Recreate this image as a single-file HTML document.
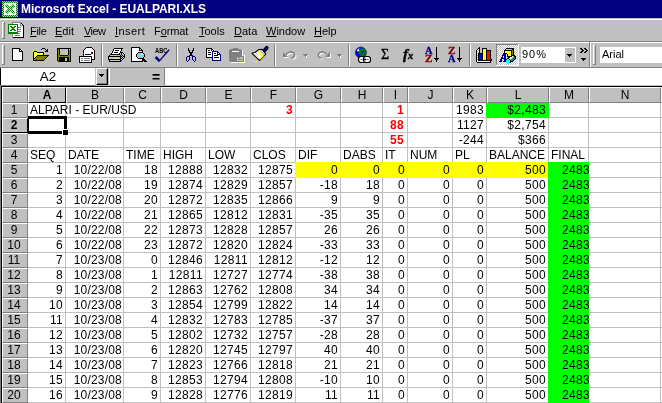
<!DOCTYPE html>
<html><head><meta charset="utf-8"><title>Microsoft Excel - EUALPARI.XLS</title>
<style>
html,body{margin:0;padding:0;}
body{width:662px;height:403px;overflow:hidden;background:#c0c0c0;position:relative;font-family:"Liberation Sans",Arial,sans-serif;font-size:12px;color:#000;}
div,span{position:absolute;box-sizing:border-box;white-space:nowrap;}
svg{position:absolute;overflow:visible;}
.title{left:0;top:0;width:662px;height:18px;background:#000080;}
.ttext{left:21px;top:3px;color:#fff;font-weight:bold;font-size:12px;line-height:13px;letter-spacing:-0.05px;}
.m{top:25px;font-size:11px;line-height:13px;}
.m u{text-decoration:underline;text-decoration-thickness:1px;text-underline-offset:1px;}
.hl{background:#fff;}
.sh{background:#808080;}
.bk{background:#000;}
.grid{left:28px;top:103px;width:634px;height:300px;background:#fff;}
.vl{top:103px;width:1px;height:300px;background:#c0c0c0;}
.hln{left:28px;height:1px;width:634px;background:#c0c0c0;}
.ch{top:87px;height:16px;background:#c0c0c0;border-top:1px solid #fff;border-left:1px solid #fff;border-right:1px solid #808080;border-bottom:1px solid #808080;text-align:center;line-height:15px;font-size:12px;}
.rh{left:2px;width:26px;height:15px;padding-right:2px;background:#c0c0c0;border-top:1px solid #fff;border-left:1px solid #fff;border-right:1px solid #808080;border-bottom:1px solid #808080;text-align:center;line-height:13px;font-size:12px;}
.c{height:14px;line-height:14px;font-size:12px;}
.r{text-align:right;letter-spacing:0.33px;}
.red{color:#f00;font-weight:bold;}
.dt{letter-spacing:0.2px;}
</style></head><body>
<div style="left:0;top:0;width:662px;height:403px;will-change:transform">

<div class="title"></div>
<div class="ttext">Microsoft Excel - EUALPARI.XLS</div>
<svg style="left:2px;top:1px" width="16" height="16" viewBox="0 0 16 16"><defs><pattern id="gd" width="2" height="2" patternUnits="userSpaceOnUse"><rect width="2" height="2" fill="#008000"/><rect width="1" height="1" fill="#c0c0c0"/><rect x="1" y="1" width="1" height="1" fill="#c0c0c0"/></pattern></defs><rect width="16" height="16" fill="url(#gd)" shape-rendering="crispEdges"/><rect x="2" y="2" width="12" height="12" fill="#fff" shape-rendering="crispEdges"/><path d="M5 5L11 11M11 5L5 11" stroke="url(#gd)" stroke-width="3" stroke-linecap="square"/><path d="M4.5 4.5L11.5 11.5" stroke="#fff" stroke-width="0.9"/></svg>
<div class="hl" style="left:0;top:19px;width:662px;height:1px"></div>
<div class="sh" style="left:2px;top:22px;width:3px;height:17px"></div><div class="hl" style="left:2px;top:22px;width:2px;height:16px"></div><div style="left:3px;top:23px;width:1px;height:15px;background:#c0c0c0"></div>
<svg style="left:8px;top:22px" width="17" height="16" viewBox="0 0 17 16" shape-rendering="crispEdges"><path fill="#808080" d="M4 0h9v1h-9zM4 1h1v1h-1zM12 1h1v1h-1zM12 2h1v1h-1zM12 3h3v1h-3zM10 5h3v1h-3zM10 7h3v1h-3zM10 9h3v1h-3zM10 11h2v1h-2zM4 12h1v1h-1zM4 13h1v1h-1zM7 13h5v1h-5zM4 14h1v1h-1z"/><path fill="#fff" d="M5 1h7v1h-7zM10 2h2v1h-2zM13 2h1v1h-1zM1 3h8v1h-8zM10 3h2v1h-2zM1 4h1v1h-1zM4 4h2v1h-2zM8 4h1v1h-1zM10 4h5v1h-5zM1 5h2v1h-2zM7 5h2v1h-2zM13 5h2v1h-2zM1 6h3v1h-3zM6 6h3v1h-3zM10 6h5v1h-5zM1 7h2v1h-2zM7 7h2v1h-2zM13 7h2v1h-2zM1 8h1v1h-1zM4 8h2v1h-2zM8 8h1v1h-1zM10 8h5v1h-5zM1 9h8v1h-8zM13 9h2v1h-2zM10 10h5v1h-5zM12 11h3v1h-3zM5 12h10v1h-10zM5 13h2v1h-2zM12 13h3v1h-3zM5 14h10v1h-10z"/><path fill="#000" d="M13 1h1v1h-1zM14 2h1v1h-1zM15 3h1v1h-1zM15 4h1v1h-1zM15 5h1v1h-1zM15 6h1v1h-1zM15 7h1v1h-1zM15 8h1v1h-1zM15 9h1v1h-1zM15 10h1v1h-1zM15 11h1v1h-1zM15 12h1v1h-1zM15 13h1v1h-1zM15 14h1v1h-1zM5 15h11v1h-11z"/><path fill="#008000" d="M0 2h10v1h-10zM0 3h1v1h-1zM9 3h1v1h-1zM0 4h1v1h-1zM2 4h2v1h-2zM6 4h2v1h-2zM9 4h1v1h-1zM0 5h1v1h-1zM3 5h4v1h-4zM9 5h1v1h-1zM0 6h1v1h-1zM4 6h2v1h-2zM9 6h1v1h-1zM0 7h1v1h-1zM3 7h4v1h-4zM9 7h1v1h-1zM0 8h1v1h-1zM2 8h2v1h-2zM6 8h2v1h-2zM9 8h1v1h-1zM0 9h1v1h-1zM9 9h1v1h-1zM0 10h10v1h-10zM0 11h10v1h-10z"/></svg>
<div class="m" style="left:30px;letter-spacing:-0.3px"><u>F</u>ile</div>
<div class="m" style="left:55px;letter-spacing:0px"><u>E</u>dit</div>
<div class="m" style="left:84px;letter-spacing:-0.6px"><u>V</u>iew</div>
<div class="m" style="left:115px;letter-spacing:0.45px"><u>I</u>nsert</div>
<div class="m" style="left:154px;letter-spacing:-0.1px">F<u>o</u>rmat</div>
<div class="m" style="left:199px;letter-spacing:0px"><u>T</u>ools</div>
<div class="m" style="left:234px;letter-spacing:0px"><u>D</u>ata</div>
<div class="m" style="left:266px;letter-spacing:0px"><u>W</u>indow</div>
<div class="m" style="left:314px;letter-spacing:0px"><u>H</u>elp</div>
<div class="sh" style="left:0;top:41px;width:662px;height:1px"></div>
<div class="hl" style="left:0;top:42px;width:662px;height:1px"></div>
<div class="sh" style="left:2px;top:45px;width:3px;height:20px"></div><div class="hl" style="left:2px;top:45px;width:2px;height:19px"></div><div style="left:3px;top:46px;width:1px;height:18px;background:#c0c0c0"></div>
<div class="sh" style="left:101px;top:44px;width:1px;height:22px"></div>
<div class="hl" style="left:102px;top:44px;width:1px;height:22px"></div>
<div class="sh" style="left:176px;top:44px;width:1px;height:22px"></div>
<div class="hl" style="left:177px;top:44px;width:1px;height:22px"></div>
<div class="sh" style="left:274px;top:44px;width:1px;height:22px"></div>
<div class="hl" style="left:275px;top:44px;width:1px;height:22px"></div>
<div class="sh" style="left:348px;top:44px;width:1px;height:22px"></div>
<div class="hl" style="left:349px;top:44px;width:1px;height:22px"></div>
<div class="sh" style="left:469px;top:44px;width:1px;height:22px"></div>
<div class="hl" style="left:470px;top:44px;width:1px;height:22px"></div>
<svg style="left:12px;top:48px" width="11" height="13" viewBox="0 0 11 13" shape-rendering="crispEdges"><path fill="#000" d="M0 0h8v1h-8zM0 1h1v1h-1zM7 1h2v1h-2zM0 2h1v1h-1zM7 2h1v1h-1zM9 2h1v1h-1zM0 3h1v1h-1zM7 3h4v1h-4zM0 4h1v1h-1zM10 4h1v1h-1zM0 5h1v1h-1zM10 5h1v1h-1zM0 6h1v1h-1zM10 6h1v1h-1zM0 7h1v1h-1zM10 7h1v1h-1zM0 8h1v1h-1zM10 8h1v1h-1zM0 9h1v1h-1zM10 9h1v1h-1zM0 10h1v1h-1zM10 10h1v1h-1zM0 11h1v1h-1zM10 11h1v1h-1zM0 12h11v1h-11z"/><path fill="#fff" d="M1 1h6v1h-6zM1 2h6v1h-6zM8 2h1v1h-1zM1 3h6v1h-6zM1 4h9v1h-9zM1 5h9v1h-9zM1 6h9v1h-9zM1 7h9v1h-9zM1 8h9v1h-9zM1 9h9v1h-9zM1 10h9v1h-9zM1 11h9v1h-9z"/></svg>
<svg style="left:33px;top:48px" width="16" height="13" viewBox="0 0 16 13" shape-rendering="crispEdges"><path fill="#000" d="M9 0h3v1h-3zM8 1h1v1h-1zM12 1h1v1h-1zM14 1h1v1h-1zM13 2h2v1h-2zM1 3h3v1h-3zM12 3h3v1h-3zM0 4h1v1h-1zM4 4h7v1h-7zM0 5h1v1h-1zM10 5h1v1h-1zM0 6h1v1h-1zM10 6h1v1h-1zM0 7h1v1h-1zM4 7h12v1h-12zM0 8h1v1h-1zM3 8h1v1h-1zM14 8h1v1h-1zM0 9h1v1h-1zM2 9h1v1h-1zM13 9h1v1h-1zM0 10h2v1h-2zM12 10h1v1h-1zM0 11h1v1h-1zM11 11h1v1h-1zM0 12h11v1h-11z"/><path fill="#ff0" d="M1 4h1v1h-1zM3 4h1v1h-1zM2 5h1v1h-1zM4 5h1v1h-1zM6 5h1v1h-1zM8 5h1v1h-1zM1 6h1v1h-1zM3 6h1v1h-1zM5 6h1v1h-1zM7 6h1v1h-1zM9 6h1v1h-1zM2 7h1v1h-1zM1 8h1v1h-1z"/><path fill="#fff" d="M2 4h1v1h-1zM1 5h1v1h-1zM3 5h1v1h-1zM5 5h1v1h-1zM7 5h1v1h-1zM9 5h1v1h-1zM2 6h1v1h-1zM4 6h1v1h-1zM6 6h1v1h-1zM8 6h1v1h-1zM1 7h1v1h-1zM3 7h1v1h-1zM2 8h1v1h-1zM1 9h1v1h-1z"/><path fill="#808000" d="M4 8h10v1h-10zM3 9h10v1h-10zM2 10h10v1h-10zM1 11h10v1h-10z"/></svg>
<svg style="left:57px;top:48px" width="14" height="14" viewBox="0 0 14 14" shape-rendering="crispEdges"><path fill="#000" d="M0 0h14v1h-14zM0 1h1v1h-1zM2 1h1v1h-1zM11 1h1v1h-1zM13 1h1v1h-1zM0 2h1v1h-1zM2 2h1v1h-1zM11 2h1v1h-1zM13 2h1v1h-1zM0 3h1v1h-1zM2 3h1v1h-1zM11 3h1v1h-1zM13 3h1v1h-1zM0 4h1v1h-1zM2 4h1v1h-1zM11 4h1v1h-1zM13 4h1v1h-1zM0 5h1v1h-1zM2 5h1v1h-1zM11 5h1v1h-1zM13 5h1v1h-1zM0 6h1v1h-1zM2 6h1v1h-1zM11 6h1v1h-1zM13 6h1v1h-1zM0 7h1v1h-1zM3 7h8v1h-8zM13 7h1v1h-1zM0 8h1v1h-1zM13 8h1v1h-1zM0 9h1v1h-1zM2 9h10v1h-10zM13 9h1v1h-1zM0 10h1v1h-1zM2 10h6v1h-6zM10 10h2v1h-2zM13 10h1v1h-1zM0 11h1v1h-1zM2 11h6v1h-6zM10 11h2v1h-2zM13 11h1v1h-1zM0 12h1v1h-1zM2 12h6v1h-6zM10 12h2v1h-2zM13 12h1v1h-1zM1 13h13v1h-13z"/><path fill="#808000" d="M1 1h1v1h-1zM1 2h1v1h-1zM12 2h1v1h-1zM1 3h1v1h-1zM12 3h1v1h-1zM1 4h1v1h-1zM12 4h1v1h-1zM1 5h1v1h-1zM12 5h1v1h-1zM1 6h1v1h-1zM12 6h1v1h-1zM1 7h2v1h-2zM11 7h2v1h-2zM1 8h12v1h-12zM1 9h1v1h-1zM12 9h1v1h-1zM1 10h1v1h-1zM12 10h1v1h-1zM1 11h1v1h-1zM12 11h1v1h-1zM1 12h1v1h-1zM12 12h1v1h-1z"/><path fill="#c0c0c0" d="M3 1h8v1h-8zM3 2h8v1h-8zM3 3h8v1h-8zM3 4h8v1h-8zM3 5h8v1h-8zM3 6h8v1h-8zM8 10h2v1h-2zM8 11h2v1h-2zM8 12h2v1h-2z"/><path fill="#fff" d="M12 1h1v1h-1z"/></svg>
<svg style="left:79px;top:47px" width="16" height="16" viewBox="0 0 16 16" shape-rendering="crispEdges"><path fill="#000" d="M7 0h6v1h-6zM6 1h1v1h-1zM13 1h1v1h-1zM5 2h1v1h-1zM14 2h1v1h-1zM4 3h1v1h-1zM15 3h1v1h-1zM4 4h1v1h-1zM15 4h1v1h-1zM4 5h1v1h-1zM15 5h1v1h-1zM4 6h1v1h-1zM15 6h1v1h-1zM4 7h1v1h-1zM15 7h1v1h-1zM4 8h1v1h-1zM15 8h1v1h-1zM0 9h13v1h-13zM15 9h1v1h-1zM0 10h1v1h-1zM12 10h1v1h-1zM15 10h1v1h-1zM0 11h1v1h-1zM12 11h1v1h-1zM15 11h1v1h-1zM0 12h1v1h-1zM12 12h4v1h-4zM0 13h1v1h-1zM12 13h1v1h-1zM0 14h1v1h-1zM12 14h1v1h-1zM0 15h13v1h-13z"/><path fill="#fff" d="M7 1h6v1h-6zM6 2h8v1h-8zM5 3h10v1h-10zM5 4h10v1h-10zM5 5h7v1h-7zM14 5h1v1h-1zM5 6h7v1h-7zM14 6h1v1h-1zM5 7h1v1h-1zM12 7h3v1h-3zM5 8h10v1h-10zM13 9h2v1h-2zM1 10h11v1h-11zM13 10h2v1h-2zM1 11h1v1h-1zM4 11h1v1h-1zM11 11h1v1h-1zM13 11h2v1h-2zM1 12h11v1h-11zM1 13h1v1h-1zM4 13h1v1h-1zM11 13h1v1h-1zM1 14h11v1h-11z"/><path fill="#800000" d="M12 5h2v1h-2zM12 6h2v1h-2z"/><path fill="#000080" d="M6 7h6v1h-6z"/><path fill="#808080" d="M2 11h2v1h-2zM5 11h6v1h-6zM2 13h2v1h-2zM5 13h6v1h-6z"/></svg>
<svg style="left:108px;top:48px" width="17" height="14" viewBox="0 0 17 14" shape-rendering="crispEdges"><path fill="#000" d="M6 0h9v1h-9zM5 1h1v1h-1zM13 1h1v1h-1zM5 2h1v1h-1zM7 2h4v1h-4zM13 2h1v1h-1zM4 3h1v1h-1zM12 3h1v1h-1zM4 4h1v1h-1zM6 4h4v1h-4zM12 4h3v1h-3zM3 5h1v1h-1zM11 5h1v1h-1zM13 5h1v1h-1zM15 5h1v1h-1zM2 6h10v1h-10zM13 6h1v1h-1zM16 6h1v1h-1zM1 7h1v1h-1zM12 7h1v1h-1zM14 7h1v1h-1zM16 7h1v1h-1zM0 8h14v1h-14zM15 8h2v1h-2zM0 9h1v1h-1zM12 9h1v1h-1zM14 9h1v1h-1zM16 9h1v1h-1zM0 10h1v1h-1zM12 10h2v1h-2zM15 10h1v1h-1zM0 11h13v1h-13zM14 11h1v1h-1zM1 12h1v1h-1zM12 12h2v1h-2zM1 13h12v1h-12z"/><path fill="#fff" d="M6 1h7v1h-7zM6 2h1v1h-1zM11 2h2v1h-2zM5 3h7v1h-7zM5 4h1v1h-1zM10 4h2v1h-2zM4 5h7v1h-7z"/><path fill="#c0c0c0" d="M12 5h1v1h-1zM14 5h1v1h-1zM12 6h1v1h-1zM14 6h2v1h-2zM2 7h10v1h-10zM13 7h1v1h-1zM15 7h1v1h-1zM14 8h1v1h-1zM1 9h11v1h-11zM13 9h1v1h-1zM15 9h1v1h-1zM1 10h6v1h-6zM10 10h2v1h-2zM14 10h1v1h-1zM13 11h1v1h-1zM2 12h10v1h-10z"/><path fill="#ff0" d="M7 10h3v1h-3z"/></svg>
<svg style="left:131px;top:47px" width="16" height="15" viewBox="0 0 16 15" shape-rendering="crispEdges"><path fill="#000" d="M0 0h9v1h-9zM0 1h1v1h-1zM8 1h2v1h-2zM0 2h1v1h-1zM8 2h1v1h-1zM10 2h1v1h-1zM0 3h1v1h-1zM8 3h4v1h-4zM0 4h1v1h-1zM11 4h1v1h-1zM0 5h1v1h-1zM7 5h5v1h-5zM0 6h1v1h-1zM6 6h1v1h-1zM12 6h1v1h-1zM0 7h1v1h-1zM5 7h1v1h-1zM13 7h1v1h-1zM0 8h1v1h-1zM5 8h1v1h-1zM13 8h1v1h-1zM0 9h1v1h-1zM5 9h1v1h-1zM13 9h1v1h-1zM0 10h1v1h-1zM6 10h1v1h-1zM12 10h1v1h-1zM0 11h1v1h-1zM7 11h6v1h-6zM0 12h1v1h-1zM11 12h3v1h-3zM0 13h1v1h-1zM11 13h4v1h-4zM0 14h12v1h-12zM13 14h3v1h-3z"/><path fill="#fff" d="M1 1h7v1h-7zM1 2h7v1h-7zM9 2h1v1h-1zM1 3h7v1h-7zM1 4h10v1h-10zM1 5h6v1h-6zM1 6h5v1h-5zM10 6h1v1h-1zM1 7h4v1h-4zM11 7h1v1h-1zM1 8h4v1h-4zM1 9h4v1h-4zM1 10h5v1h-5zM1 11h6v1h-6zM1 12h10v1h-10zM1 13h10v1h-10z"/><path fill="#0ff" d="M7 6h1v1h-1zM6 7h1v1h-1zM11 8h1v1h-1zM11 9h1v1h-1zM9 10h2v1h-2z"/><path fill="#c0c0c0" d="M8 6h2v1h-2zM11 6h1v1h-1zM7 7h4v1h-4zM12 7h1v1h-1zM6 8h5v1h-5zM12 8h1v1h-1zM6 9h5v1h-5zM12 9h1v1h-1zM7 10h2v1h-2zM11 10h1v1h-1z"/></svg>
<svg style="left:186px;top:48px" width="10" height="14" viewBox="0 0 10 14" shape-rendering="crispEdges"><path fill="#000" d="M2 0h1v1h-1zM7 0h1v1h-1zM2 1h1v1h-1zM7 1h1v1h-1zM2 2h2v1h-2zM6 2h2v1h-2zM3 3h1v1h-1zM6 3h1v1h-1zM3 4h4v1h-4zM4 5h2v1h-2zM4 6h2v1h-2z"/><path fill="#000080" d="M3 7h4v1h-4zM1 8h3v1h-3zM6 8h3v1h-3zM0 9h1v1h-1zM3 9h1v1h-1zM6 9h1v1h-1zM9 9h1v1h-1zM0 10h1v1h-1zM3 10h1v1h-1zM6 10h1v1h-1zM9 10h1v1h-1zM0 11h1v1h-1zM3 11h1v1h-1zM6 11h1v1h-1zM9 11h1v1h-1zM0 12h1v1h-1zM2 12h1v1h-1zM7 12h1v1h-1zM9 12h1v1h-1zM1 13h1v1h-1zM8 13h1v1h-1z"/></svg>
<svg style="left:206px;top:48px" width="15" height="13" viewBox="0 0 15 13" shape-rendering="crispEdges"><path fill="#000" d="M0 0h6v1h-6zM0 1h1v1h-1zM5 1h2v1h-2zM0 2h1v1h-1zM2 2h2v1h-2zM5 2h1v1h-1zM7 2h1v1h-1zM0 3h1v1h-1zM0 4h1v1h-1zM2 4h3v1h-3zM0 5h1v1h-1zM8 5h2v1h-2zM0 6h1v1h-1zM2 6h3v1h-3zM0 7h1v1h-1zM8 7h4v1h-4zM0 8h1v1h-1zM0 9h6v1h-6zM8 9h5v1h-5z"/><path fill="#fff" d="M1 1h4v1h-4zM1 2h1v1h-1zM4 2h1v1h-1zM6 2h1v1h-1zM1 3h5v1h-5zM1 4h1v1h-1zM5 4h1v1h-1zM7 4h4v1h-4zM1 5h5v1h-5zM7 5h1v1h-1zM10 5h1v1h-1zM12 5h1v1h-1zM1 6h1v1h-1zM5 6h1v1h-1zM7 6h4v1h-4zM1 7h5v1h-5zM7 7h1v1h-1zM12 7h2v1h-2zM1 8h5v1h-5zM7 8h7v1h-7zM7 9h1v1h-1zM13 9h1v1h-1zM7 10h7v1h-7zM7 11h7v1h-7z"/><path fill="#000080" d="M6 3h6v1h-6zM6 4h1v1h-1zM11 4h2v1h-2zM6 5h1v1h-1zM11 5h1v1h-1zM13 5h1v1h-1zM6 6h1v1h-1zM11 6h4v1h-4zM6 7h1v1h-1zM14 7h1v1h-1zM6 8h1v1h-1zM14 8h1v1h-1zM6 9h1v1h-1zM14 9h1v1h-1zM6 10h1v1h-1zM14 10h1v1h-1zM6 11h1v1h-1zM14 11h1v1h-1zM6 12h9v1h-9z"/></svg>
<svg style="left:229px;top:48px" width="17" height="15" viewBox="0 0 17 15" shape-rendering="crispEdges"><path fill="#808080" d="M4 0h5v1h-5zM1 1h11v1h-11zM0 2h13v1h-13zM0 3h3v1h-3zM10 3h3v1h-3zM0 4h13v1h-13zM0 5h13v1h-13zM0 6h13v1h-13zM0 7h13v1h-13zM0 8h15v1h-15zM0 9h8v1h-8zM9 9h2v1h-2zM14 9h1v1h-1zM0 10h8v1h-8zM14 10h1v1h-1zM0 11h8v1h-8zM9 11h4v1h-4zM14 11h1v1h-1zM0 12h8v1h-8zM14 12h1v1h-1zM1 13h14v1h-14z"/><path fill="#fff" d="M13 2h1v1h-1zM3 3h7v1h-7zM13 3h1v1h-1zM13 4h1v1h-1zM13 5h1v1h-1zM13 6h1v1h-1zM13 7h1v1h-1zM15 7h1v1h-1zM15 8h1v1h-1zM15 9h1v1h-1zM15 10h1v1h-1zM15 11h1v1h-1zM15 12h1v1h-1zM15 13h1v1h-1zM2 14h14v1h-14z"/><path fill="#c0c0c0" d="M8 9h1v1h-1zM11 9h3v1h-3zM8 10h6v1h-6zM8 11h1v1h-1zM13 11h1v1h-1zM8 12h6v1h-6z"/></svg>
<svg style="left:476px;top:47px" width="16" height="16" viewBox="0 0 16 16" shape-rendering="crispEdges"><path fill="#000" d="M3 0h1v1h-1zM2 1h2v1h-2zM6 1h5v1h-5zM1 2h1v1h-1zM3 2h1v1h-1zM6 2h1v1h-1zM10 2h1v1h-1zM0 3h1v1h-1zM3 3h1v1h-1zM6 3h1v1h-1zM10 3h5v1h-5zM0 4h1v1h-1zM3 4h1v1h-1zM6 4h1v1h-1zM10 4h1v1h-1zM14 4h1v1h-1zM0 5h1v1h-1zM3 5h1v1h-1zM6 5h1v1h-1zM10 5h1v1h-1zM14 5h1v1h-1zM0 6h1v1h-1zM2 6h5v1h-5zM10 6h1v1h-1zM14 6h1v1h-1zM0 7h1v1h-1zM2 7h1v1h-1zM6 7h1v1h-1zM10 7h1v1h-1zM14 7h1v1h-1zM0 8h1v1h-1zM2 8h1v1h-1zM6 8h1v1h-1zM10 8h1v1h-1zM14 8h1v1h-1zM0 9h1v1h-1zM2 9h1v1h-1zM6 9h1v1h-1zM10 9h1v1h-1zM14 9h1v1h-1zM0 10h1v1h-1zM2 10h1v1h-1zM6 10h1v1h-1zM10 10h1v1h-1zM14 10h1v1h-1zM0 11h1v1h-1zM2 11h1v1h-1zM6 11h1v1h-1zM10 11h1v1h-1zM14 11h1v1h-1zM0 12h1v1h-1zM2 12h1v1h-1zM6 12h1v1h-1zM10 12h1v1h-1zM14 12h2v1h-2zM0 13h1v1h-1zM2 13h14v1h-14zM0 14h1v1h-1zM14 14h1v1h-1zM1 15h14v1h-14z"/><path fill="#fff" d="M2 2h1v1h-1zM1 3h1v1h-1zM2 4h1v1h-1zM1 5h1v1h-1zM1 7h1v1h-1zM1 9h1v1h-1zM1 11h1v1h-1zM1 13h1v1h-1zM1 14h13v1h-13z"/><path fill="#ff0" d="M7 2h3v1h-3zM7 3h3v1h-3zM7 4h3v1h-3zM7 5h3v1h-3zM7 6h3v1h-3zM7 7h3v1h-3zM7 8h3v1h-3zM7 9h3v1h-3zM7 10h3v1h-3zM7 11h3v1h-3zM7 12h3v1h-3z"/><path fill="#c0c0c0" d="M2 3h1v1h-1zM1 4h1v1h-1zM2 5h1v1h-1zM1 6h1v1h-1zM1 8h1v1h-1zM1 10h1v1h-1zM1 12h1v1h-1z"/><path fill="#f00" d="M11 4h3v1h-3zM11 5h3v1h-3zM11 6h3v1h-3zM11 7h3v1h-3zM11 8h3v1h-3zM11 9h3v1h-3zM11 10h3v1h-3zM11 11h3v1h-3zM11 12h3v1h-3z"/><path fill="#00f" d="M3 7h3v1h-3zM3 8h3v1h-3zM3 9h3v1h-3zM3 10h3v1h-3zM3 11h3v1h-3zM3 12h3v1h-3z"/></svg>
<svg style="left:250px;top:45px" width="20" height="19" viewBox="0 0 20 19"><path d="M16.8 2.8L13.8 6.2" stroke="#000" stroke-width="3.8" stroke-linecap="round"/><path d="M16.8 2.8L13.6 6.4" stroke="#000080" stroke-width="2" stroke-linecap="round"/><path d="M9 4.5L12 4.3L15.8 9.2L9.4 15.3L2 8.4L2.2 8L5 7.5Z" fill="#fff" stroke="#000" stroke-width="1.1" stroke-linejoin="round"/><path d="M9.3 5.2L11.8 5L14.9 9.2L13.4 10.6Z" fill="#c0c0c0"/><path d="M4.5 9L7 11.5M6.3 8.2L9 11M5.5 10.6L8 13" stroke="#a0a0a0" stroke-width="0.7" stroke-dasharray="1 1"/><path d="M7.8 6.4L12.6 11L9.6 13.8" fill="none" stroke="#ff0" stroke-width="1.7"/><path d="M2 16.5h5.5" stroke="#ff0" stroke-width="1" stroke-dasharray="1 1" shape-rendering="crispEdges"/><rect x="7" y="15" width="1" height="1" fill="#ff0" shape-rendering="crispEdges"/></svg>
<svg style="left:154px;top:46px" width="18" height="17" viewBox="0 0 18 17"><text x="1" y="7" font-family="Liberation Sans,sans-serif" font-size="7" font-weight="bold" textLength="12.5" lengthAdjust="spacingAndGlyphs" fill="#000">ABC</text><path d="M1.6 11 L5.6 15" fill="none" stroke="#000080" stroke-width="2.6"/><path d="M5 15.4 L15.2 3.8" fill="none" stroke="#000080" stroke-width="1.3"/></svg>
<svg style="left:283px;top:51px" width="14" height="9" viewBox="0 0 14 9"><g transform="translate(1,1)"><path d="M0 1v5h5z" fill="#fff"/><path d="M3 3.5C5 0.5 9 0.2 11 2.2C12.6 4.2 11.4 7 8.5 7.2" fill="none" stroke="#fff" stroke-width="1.6"/></g><path d="M0 1v5h5z" fill="#808080"/><path d="M3 3.5C5 0.5 9 0.2 11 2.2C12.6 4.2 11.4 7 8.5 7.2" fill="none" stroke="#808080" stroke-width="1.6"/></svg>
<svg style="left:316px;top:51px" width="14" height="9" viewBox="0 0 14 9"><g transform="translate(14,0) scale(-1,1)"><g transform="translate(-1,1)"><path d="M0 1v5h5z" fill="#fff"/><path d="M3 3.5C5 0.5 9 0.2 11 2.2C12.6 4.2 11.4 7 8.5 7.2" fill="none" stroke="#fff" stroke-width="1.6"/></g><path d="M0 1v5h5z" fill="#808080"/><path d="M3 3.5C5 0.5 9 0.2 11 2.2C12.6 4.2 11.4 7 8.5 7.2" fill="none" stroke="#808080" stroke-width="1.6"/></g></svg>
<svg style="left:303px;top:54px" width="6" height="4" viewBox="0 0 6 4" shape-rendering="crispEdges"><path fill="#808080" d="M0 0h5v1h-5zM1 1h3v1h-3zM2 2h1v1h-1z"/><path fill="#fff" d="M4 1h1v1h-1zM3 2h1v1h-1zM3 3h1v1h-1z"/></svg>
<svg style="left:337px;top:54px" width="6" height="4" viewBox="0 0 6 4" shape-rendering="crispEdges"><path fill="#808080" d="M0 0h5v1h-5zM1 1h3v1h-3zM2 2h1v1h-1z"/><path fill="#fff" d="M4 1h1v1h-1zM3 2h1v1h-1zM3 3h1v1h-1z"/></svg>
<svg style="left:355px;top:47px" width="16" height="16" viewBox="0 0 16 16"><circle cx="5.9" cy="5.6" r="5.5" fill="#00f" stroke="#303030" stroke-width="0.9"/><path d="M4.6 2.2C6.5 0.6 9.5 1 10.8 3.2C11.6 5.5 11 8 9 10L5.5 10C5.8 8.5 4.6 7.6 3.6 6.6C3 5 3.6 3.4 4.6 2.2Z" fill="#008000"/><path d="M6.5 4.2l2.2-0.4l0.6 1.2l-1.6 0.4l0.6 1l-1.2 0.2z" fill="#00f"/><path d="M5 7l1.5 0.3l-0.5 1z" fill="#00f"/><path d="M9.5 7.5l1 1.5l-1.2 0.3z" fill="#00f"/><path d="M1.8 3.6L3.6 1.6L4.4 3.4L3 4.8Z" fill="#fff"/><rect x="4" y="1" width="1" height="1" fill="#008080"/><rect x="3.5" y="9.5" width="7" height="6" rx="2.5" fill="#fff" stroke="#000" stroke-width="1.2"/><rect x="8.5" y="9.5" width="7" height="6" rx="2.5" fill="#fff" stroke="#000" stroke-width="1.2"/><path d="M5.5 12.5h8" stroke="#808080" stroke-width="1"/><path d="M8 12.5h3" stroke="#000" stroke-width="1.4"/></svg>
<svg style="left:379px;top:46px" width="14" height="16" viewBox="0 0 14 16"><text x="2" y="13" font-family="Liberation Serif,serif" font-size="14" fill="#000" stroke="#000" stroke-width="0.35">Σ</text></svg>
<svg style="left:400px;top:46px" width="18" height="18" viewBox="0 0 18 18"><text x="3" y="13" font-family="Liberation Serif,serif" font-size="15" font-style="italic" font-weight="bold" fill="#000" stroke="#000" stroke-width="0.4">f</text><text x="8" y="13" font-family="Liberation Serif,serif" font-size="10.5" font-style="italic" font-weight="bold" fill="#000" stroke="#000" stroke-width="0.4">x</text></svg>
<svg style="left:425px;top:46px" width="16" height="17" viewBox="0 0 16 17"><text x="0" y="8.3" font-family="Liberation Serif,serif" font-size="11" font-weight="bold" fill="#000080" stroke="#000080" stroke-width="0.3" textLength="7.5" lengthAdjust="spacingAndGlyphs">A</text><text x="0" y="16.3" font-family="Liberation Serif,serif" font-size="11" font-weight="bold" fill="#800000" stroke="#800000" stroke-width="0.3" textLength="7.5" lengthAdjust="spacingAndGlyphs">Z</text><path d="M11 1h1v11h2l-2.5 4l-2.5-4h2z" fill="#000" shape-rendering="crispEdges"/></svg>
<svg style="left:448px;top:46px" width="16" height="17" viewBox="0 0 16 17"><text x="0" y="8.3" font-family="Liberation Serif,serif" font-size="11" font-weight="bold" fill="#800000" stroke="#800000" stroke-width="0.3" textLength="7.5" lengthAdjust="spacingAndGlyphs">Z</text><text x="0" y="16.3" font-family="Liberation Serif,serif" font-size="11" font-weight="bold" fill="#000080" stroke="#000080" stroke-width="0.3" textLength="7.5" lengthAdjust="spacingAndGlyphs">A</text><path d="M11 1h1v11h2l-2.5 4l-2.5-4h2z" fill="#000" shape-rendering="crispEdges"/></svg>
<svg style="left:496px;top:44px" width="23" height="22" viewBox="0 0 23 22" shape-rendering="crispEdges"><defs><pattern id="chk" width="2" height="2" patternUnits="userSpaceOnUse"><rect width="2" height="2" fill="#fff"/><rect width="1" height="1" fill="#c0c0c0"/><rect x="1" y="1" width="1" height="1" fill="#c0c0c0"/></pattern></defs><rect width="23" height="22" fill="url(#chk)"/><path d="M0 0h23v1h-23zM0 0h1v22h-1z" fill="#808080"/><path d="M0 21h23v1h-23zM22 0h1v22h-1z" fill="#fff"/></svg>
<svg style="left:499px;top:47px" width="18" height="17" viewBox="0 0 18 17" shape-rendering="crispEdges"><path fill="#000" d="M7 1h8v1h-8zM6 2h1v1h-1zM13 2h2v1h-2zM5 3h8v1h-8zM14 3h1v1h-1zM5 4h1v1h-1zM12 4h1v1h-1zM14 4h1v1h-1zM5 5h1v1h-1zM12 5h1v1h-1zM14 5h1v1h-1zM6 6h2v1h-2zM12 6h1v1h-1zM14 6h1v1h-1zM6 7h1v1h-1zM8 7h1v1h-1zM12 7h1v1h-1zM14 7h1v1h-1zM6 8h1v1h-1zM8 8h1v1h-1zM12 8h4v1h-4zM6 9h1v1h-1zM8 9h5v1h-5zM15 9h2v1h-2zM6 10h1v1h-1zM9 10h2v1h-2zM16 10h1v1h-1zM6 11h1v1h-1zM8 11h2v1h-2zM16 11h1v1h-1zM6 12h2v1h-2zM10 12h1v1h-1zM15 12h1v1h-1zM6 13h1v1h-1zM11 13h1v1h-1zM14 13h1v1h-1zM6 14h1v1h-1zM11 14h3v1h-3zM11 15h1v1h-1z"/><path fill="#c0c0c0" d="M7 2h6v1h-6zM14 9h1v1h-1zM13 10h1v1h-1zM12 11h1v1h-1zM11 12h1v1h-1z"/><path fill="#808000" d="M13 3h1v1h-1zM13 4h1v1h-1zM13 5h1v1h-1zM13 6h1v1h-1zM13 7h1v1h-1z"/><path fill="#ff0" d="M6 4h6v1h-6zM6 5h6v1h-6zM8 6h4v1h-4zM9 7h3v1h-3zM9 8h3v1h-3z"/><path fill="#000080" d="M4 6h2v1h-2zM4 7h2v1h-2zM3 8h3v1h-3zM3 9h1v1h-1zM5 9h1v1h-1zM2 10h2v1h-2zM5 10h1v1h-1zM2 11h4v1h-4zM1 12h2v1h-2zM5 12h1v1h-1zM1 13h2v1h-2zM5 13h1v1h-1zM0 14h3v1h-3zM4 14h2v1h-2z"/><path fill="#fff" d="M13 9h1v1h-1zM11 10h2v1h-2zM10 11h2v1h-2z"/><path fill="#808080" d="M14 10h1v1h-1zM13 11h1v1h-1zM12 12h1v1h-1z"/><path fill="#008080" d="M15 10h1v1h-1zM14 11h2v1h-2zM13 12h2v1h-2zM12 13h2v1h-2z"/><path fill="#0ff" d="M8 12h2v1h-2zM7 13h4v1h-4zM7 14h4v1h-4zM7 15h4v1h-4zM8 16h2v1h-2z"/></svg>
<div class="hl" style="left:521px;top:47px;width:55px;height:16px"></div>
<div style="left:522px;top:48px;font-size:11px;line-height:13px;letter-spacing:1px">90%</div>
<div style="left:565px;top:48px;width:10px;height:14px;background:#c0c0c0"></div>
<svg style="left:567px;top:54px" width="5" height="3" viewBox="0 0 5 3" shape-rendering="crispEdges"><path fill="#000" d="M0 0h5v1h-5zM1 1h3v1h-3zM2 2h1v1h-1z"/></svg>
<svg style="left:580px;top:48px" width="8" height="5" viewBox="0 0 8 5" shape-rendering="crispEdges"><path fill="#000" d="M0 0h2v1h-2zM4 0h2v1h-2zM1 1h2v1h-2zM5 1h2v1h-2zM2 2h2v1h-2zM6 2h2v1h-2zM1 3h2v1h-2zM5 3h2v1h-2zM0 4h2v1h-2zM4 4h2v1h-2z"/></svg>
<svg style="left:581px;top:58px" width="5" height="3" viewBox="0 0 5 3" shape-rendering="crispEdges"><path fill="#000" d="M0 0h5v1h-5zM1 1h3v1h-3zM2 2h1v1h-1z"/></svg>
<div class="sh" style="left:589px;top:42px;width:1px;height:25px"></div>
<div class="hl" style="left:590px;top:42px;width:1px;height:25px"></div>
<div class="sh" style="left:593px;top:45px;width:3px;height:20px"></div><div class="hl" style="left:593px;top:45px;width:2px;height:19px"></div><div style="left:594px;top:46px;width:1px;height:18px;background:#c0c0c0"></div>
<div class="hl" style="left:600px;top:47px;width:62px;height:16px"></div>
<div style="left:602px;top:48px;font-size:11px;line-height:13px">Arial</div>
<div class="sh" style="left:0;top:67px;width:662px;height:1px"></div>
<div style="left:0;top:68px;width:95px;height:17px;background:#fff;border-left:1px solid #000"></div>
<div style="left:0;top:69px;width:96px;text-align:center;font-size:13.33px;line-height:15px">A2</div>
<div style="left:96px;top:68px;width:12px;height:17px;background:#c0c0c0;border:1px solid #fff;border-right-color:#000;border-bottom-color:#000"></div>
<div class="sh" style="left:97px;top:83px;width:10px;height:1px"></div><div class="sh" style="left:106px;top:69px;width:1px;height:15px"></div>
<svg style="left:99px;top:74px" width="5" height="3" viewBox="0 0 5 3" shape-rendering="crispEdges"><path fill="#000" d="M0 0h5v1h-5zM1 1h3v1h-3zM2 2h1v1h-1z"/></svg>
<div class="hl" style="left:109px;top:68px;width:1px;height:17px"></div>
<div style="left:152px;top:67px;font-size:14px;font-weight:bold;line-height:20px">=</div>
<div class="sh" style="left:164px;top:68px;width:1px;height:17px"></div>
<div style="left:165px;top:68px;width:497px;height:17px;background:#fff"></div>
<div class="sh" style="left:0px;top:85px;width:95px;height:1px"></div><div class="sh" style="left:0px;top:85px;width:1px;height:318px"></div>
<div class="bk" style="left:1px;top:86px;width:661px;height:1px"></div>
<div class="bk" style="left:1px;top:86px;width:1px;height:317px"></div>
<div class="ch" style="left:2px;width:26px"></div>
<div class="ch" style="left:28px;width:38px;font-weight:bold;border-right-color:#000;border-bottom-color:#000;">A</div>
<div class="ch" style="left:66px;width:58px;">B</div>
<div class="ch" style="left:124px;width:37px;">C</div>
<div class="ch" style="left:161px;width:45px;">D</div>
<div class="ch" style="left:206px;width:45px;">E</div>
<div class="ch" style="left:251px;width:45px;">F</div>
<div class="ch" style="left:296px;width:45px;">G</div>
<div class="ch" style="left:341px;width:42px;">H</div>
<div class="ch" style="left:383px;width:25px;">I</div>
<div class="ch" style="left:408px;width:45px;">J</div>
<div class="ch" style="left:453px;width:34px;">K</div>
<div class="ch" style="left:487px;width:62px;">L</div>
<div class="ch" style="left:549px;width:40px;">M</div>
<div class="ch" style="left:589px;width:72px;">N</div>
<div class="ch" style="left:661px;width:20px"></div>
<div class="rh" style="top:103px;">1</div>
<div class="rh" style="top:118px;font-weight:bold;border-right-color:#000;border-bottom-color:#000;">2</div>
<div class="rh" style="top:133px;">3</div>
<div class="rh" style="top:148px;">4</div>
<div class="rh" style="top:163px;">5</div>
<div class="rh" style="top:178px;">6</div>
<div class="rh" style="top:193px;">7</div>
<div class="rh" style="top:208px;">8</div>
<div class="rh" style="top:223px;">9</div>
<div class="rh" style="top:238px;">10</div>
<div class="rh" style="top:253px;">11</div>
<div class="rh" style="top:268px;">12</div>
<div class="rh" style="top:283px;">13</div>
<div class="rh" style="top:298px;">14</div>
<div class="rh" style="top:313px;">15</div>
<div class="rh" style="top:328px;">16</div>
<div class="rh" style="top:343px;">17</div>
<div class="rh" style="top:358px;">18</div>
<div class="rh" style="top:373px;">19</div>
<div class="rh" style="top:388px;">20</div>
<div class="grid"></div>
<div class="vl" style="left:65px"></div>
<div class="vl" style="left:123px"></div>
<div class="vl" style="left:160px"></div>
<div class="vl" style="left:205px"></div>
<div class="vl" style="left:250px"></div>
<div class="vl" style="left:295px"></div>
<div class="vl" style="left:340px"></div>
<div class="vl" style="left:382px"></div>
<div class="vl" style="left:407px"></div>
<div class="vl" style="left:452px"></div>
<div class="vl" style="left:486px"></div>
<div class="vl" style="left:548px"></div>
<div class="vl" style="left:588px"></div>
<div class="vl" style="left:660px"></div>
<div class="hln" style="top:117px"></div>
<div class="hln" style="top:132px"></div>
<div class="hln" style="top:147px"></div>
<div class="hln" style="top:162px"></div>
<div class="hln" style="top:177px"></div>
<div class="hln" style="top:192px"></div>
<div class="hln" style="top:207px"></div>
<div class="hln" style="top:222px"></div>
<div class="hln" style="top:237px"></div>
<div class="hln" style="top:252px"></div>
<div class="hln" style="top:267px"></div>
<div class="hln" style="top:282px"></div>
<div class="hln" style="top:297px"></div>
<div class="hln" style="top:312px"></div>
<div class="hln" style="top:327px"></div>
<div class="hln" style="top:342px"></div>
<div class="hln" style="top:357px"></div>
<div class="hln" style="top:372px"></div>
<div class="hln" style="top:387px"></div>
<div class="hln" style="top:402px"></div>
<div style="left:295px;top:162px;width:254px;height:16px;background:#ffff00"></div>
<div style="left:548px;top:162px;width:41px;height:241px;background:#00ff00"></div>
<div style="left:486px;top:103px;width:63px;height:15px;background:#00ff00"></div>
<div class="c " style="left:30px;top:103px">ALPARI - EUR/USD</div>
<div class="c r red" style="left:251px;top:103px;width:42px">3</div>
<div class="c r red" style="left:383px;top:103px;width:21px">1</div>
<div class="c r red" style="left:383px;top:118px;width:21px">88</div>
<div class="c r red" style="left:383px;top:133px;width:21px">55</div>
<div class="c r " style="left:453px;top:103px;width:31px">1983</div>
<div class="c r " style="left:453px;top:118px;width:31px">1127</div>
<div class="c r " style="left:453px;top:133px;width:31px">-244</div>
<div class="c r " style="left:487px;top:103px;width:59px">$2,483</div>
<div class="c r " style="left:487px;top:118px;width:59px">$2,754</div>
<div class="c r " style="left:487px;top:133px;width:59px">$366</div>
<div class="c " style="left:30px;top:148px">SEQ</div>
<div class="c " style="left:68px;top:148px">DATE</div>
<div class="c " style="left:126px;top:148px">TIME</div>
<div class="c " style="left:163px;top:148px">HIGH</div>
<div class="c " style="left:208px;top:148px">LOW</div>
<div class="c " style="left:253px;top:148px">CLOS</div>
<div class="c " style="left:298px;top:148px">DIF</div>
<div class="c " style="left:343px;top:148px">DABS</div>
<div class="c " style="left:385px;top:148px">IT</div>
<div class="c " style="left:410px;top:148px">NUM</div>
<div class="c " style="left:455px;top:148px">PL</div>
<div class="c " style="left:489px;top:148px">BALANCE</div>
<div class="c " style="left:551px;top:148px">FINAL</div>
<div class="c r " style="left:28px;top:163px;width:35px">1</div>
<div class="c r dt" style="left:66px;top:163px;width:56px">10/22/08</div>
<div class="c r " style="left:124px;top:163px;width:34px">18</div>
<div class="c r " style="left:161px;top:163px;width:42px">12888</div>
<div class="c r " style="left:206px;top:163px;width:42px">12832</div>
<div class="c r " style="left:251px;top:163px;width:42px">12875</div>
<div class="c r " style="left:296px;top:163px;width:42px">0</div>
<div class="c r " style="left:341px;top:163px;width:39px">0</div>
<div class="c r " style="left:383px;top:163px;width:22px">0</div>
<div class="c r " style="left:408px;top:163px;width:42px">0</div>
<div class="c r " style="left:453px;top:163px;width:31px">0</div>
<div class="c r " style="left:487px;top:163px;width:59px">500</div>
<div class="c r " style="left:549px;top:163px;width:41px">2483</div>
<div class="c r " style="left:28px;top:178px;width:35px">2</div>
<div class="c r dt" style="left:66px;top:178px;width:56px">10/22/08</div>
<div class="c r " style="left:124px;top:178px;width:34px">19</div>
<div class="c r " style="left:161px;top:178px;width:42px">12874</div>
<div class="c r " style="left:206px;top:178px;width:42px">12829</div>
<div class="c r " style="left:251px;top:178px;width:42px">12857</div>
<div class="c r " style="left:296px;top:178px;width:42px">-18</div>
<div class="c r " style="left:341px;top:178px;width:39px">18</div>
<div class="c r " style="left:383px;top:178px;width:22px">0</div>
<div class="c r " style="left:408px;top:178px;width:42px">0</div>
<div class="c r " style="left:453px;top:178px;width:31px">0</div>
<div class="c r " style="left:487px;top:178px;width:59px">500</div>
<div class="c r " style="left:549px;top:178px;width:41px">2483</div>
<div class="c r " style="left:28px;top:193px;width:35px">3</div>
<div class="c r dt" style="left:66px;top:193px;width:56px">10/22/08</div>
<div class="c r " style="left:124px;top:193px;width:34px">20</div>
<div class="c r " style="left:161px;top:193px;width:42px">12872</div>
<div class="c r " style="left:206px;top:193px;width:42px">12835</div>
<div class="c r " style="left:251px;top:193px;width:42px">12866</div>
<div class="c r " style="left:296px;top:193px;width:42px">9</div>
<div class="c r " style="left:341px;top:193px;width:39px">9</div>
<div class="c r " style="left:383px;top:193px;width:22px">0</div>
<div class="c r " style="left:408px;top:193px;width:42px">0</div>
<div class="c r " style="left:453px;top:193px;width:31px">0</div>
<div class="c r " style="left:487px;top:193px;width:59px">500</div>
<div class="c r " style="left:549px;top:193px;width:41px">2483</div>
<div class="c r " style="left:28px;top:208px;width:35px">4</div>
<div class="c r dt" style="left:66px;top:208px;width:56px">10/22/08</div>
<div class="c r " style="left:124px;top:208px;width:34px">21</div>
<div class="c r " style="left:161px;top:208px;width:42px">12865</div>
<div class="c r " style="left:206px;top:208px;width:42px">12812</div>
<div class="c r " style="left:251px;top:208px;width:42px">12831</div>
<div class="c r " style="left:296px;top:208px;width:42px">-35</div>
<div class="c r " style="left:341px;top:208px;width:39px">35</div>
<div class="c r " style="left:383px;top:208px;width:22px">0</div>
<div class="c r " style="left:408px;top:208px;width:42px">0</div>
<div class="c r " style="left:453px;top:208px;width:31px">0</div>
<div class="c r " style="left:487px;top:208px;width:59px">500</div>
<div class="c r " style="left:549px;top:208px;width:41px">2483</div>
<div class="c r " style="left:28px;top:223px;width:35px">5</div>
<div class="c r dt" style="left:66px;top:223px;width:56px">10/22/08</div>
<div class="c r " style="left:124px;top:223px;width:34px">22</div>
<div class="c r " style="left:161px;top:223px;width:42px">12873</div>
<div class="c r " style="left:206px;top:223px;width:42px">12828</div>
<div class="c r " style="left:251px;top:223px;width:42px">12857</div>
<div class="c r " style="left:296px;top:223px;width:42px">26</div>
<div class="c r " style="left:341px;top:223px;width:39px">26</div>
<div class="c r " style="left:383px;top:223px;width:22px">0</div>
<div class="c r " style="left:408px;top:223px;width:42px">0</div>
<div class="c r " style="left:453px;top:223px;width:31px">0</div>
<div class="c r " style="left:487px;top:223px;width:59px">500</div>
<div class="c r " style="left:549px;top:223px;width:41px">2483</div>
<div class="c r " style="left:28px;top:238px;width:35px">6</div>
<div class="c r dt" style="left:66px;top:238px;width:56px">10/22/08</div>
<div class="c r " style="left:124px;top:238px;width:34px">23</div>
<div class="c r " style="left:161px;top:238px;width:42px">12872</div>
<div class="c r " style="left:206px;top:238px;width:42px">12820</div>
<div class="c r " style="left:251px;top:238px;width:42px">12824</div>
<div class="c r " style="left:296px;top:238px;width:42px">-33</div>
<div class="c r " style="left:341px;top:238px;width:39px">33</div>
<div class="c r " style="left:383px;top:238px;width:22px">0</div>
<div class="c r " style="left:408px;top:238px;width:42px">0</div>
<div class="c r " style="left:453px;top:238px;width:31px">0</div>
<div class="c r " style="left:487px;top:238px;width:59px">500</div>
<div class="c r " style="left:549px;top:238px;width:41px">2483</div>
<div class="c r " style="left:28px;top:253px;width:35px">7</div>
<div class="c r dt" style="left:66px;top:253px;width:56px">10/23/08</div>
<div class="c r " style="left:124px;top:253px;width:34px">0</div>
<div class="c r " style="left:161px;top:253px;width:42px">12846</div>
<div class="c r " style="left:206px;top:253px;width:42px">12811</div>
<div class="c r " style="left:251px;top:253px;width:42px">12812</div>
<div class="c r " style="left:296px;top:253px;width:42px">-12</div>
<div class="c r " style="left:341px;top:253px;width:39px">12</div>
<div class="c r " style="left:383px;top:253px;width:22px">0</div>
<div class="c r " style="left:408px;top:253px;width:42px">0</div>
<div class="c r " style="left:453px;top:253px;width:31px">0</div>
<div class="c r " style="left:487px;top:253px;width:59px">500</div>
<div class="c r " style="left:549px;top:253px;width:41px">2483</div>
<div class="c r " style="left:28px;top:268px;width:35px">8</div>
<div class="c r dt" style="left:66px;top:268px;width:56px">10/23/08</div>
<div class="c r " style="left:124px;top:268px;width:34px">1</div>
<div class="c r " style="left:161px;top:268px;width:42px">12811</div>
<div class="c r " style="left:206px;top:268px;width:42px">12727</div>
<div class="c r " style="left:251px;top:268px;width:42px">12774</div>
<div class="c r " style="left:296px;top:268px;width:42px">-38</div>
<div class="c r " style="left:341px;top:268px;width:39px">38</div>
<div class="c r " style="left:383px;top:268px;width:22px">0</div>
<div class="c r " style="left:408px;top:268px;width:42px">0</div>
<div class="c r " style="left:453px;top:268px;width:31px">0</div>
<div class="c r " style="left:487px;top:268px;width:59px">500</div>
<div class="c r " style="left:549px;top:268px;width:41px">2483</div>
<div class="c r " style="left:28px;top:283px;width:35px">9</div>
<div class="c r dt" style="left:66px;top:283px;width:56px">10/23/08</div>
<div class="c r " style="left:124px;top:283px;width:34px">2</div>
<div class="c r " style="left:161px;top:283px;width:42px">12863</div>
<div class="c r " style="left:206px;top:283px;width:42px">12762</div>
<div class="c r " style="left:251px;top:283px;width:42px">12808</div>
<div class="c r " style="left:296px;top:283px;width:42px">34</div>
<div class="c r " style="left:341px;top:283px;width:39px">34</div>
<div class="c r " style="left:383px;top:283px;width:22px">0</div>
<div class="c r " style="left:408px;top:283px;width:42px">0</div>
<div class="c r " style="left:453px;top:283px;width:31px">0</div>
<div class="c r " style="left:487px;top:283px;width:59px">500</div>
<div class="c r " style="left:549px;top:283px;width:41px">2483</div>
<div class="c r " style="left:28px;top:298px;width:35px">10</div>
<div class="c r dt" style="left:66px;top:298px;width:56px">10/23/08</div>
<div class="c r " style="left:124px;top:298px;width:34px">3</div>
<div class="c r " style="left:161px;top:298px;width:42px">12854</div>
<div class="c r " style="left:206px;top:298px;width:42px">12799</div>
<div class="c r " style="left:251px;top:298px;width:42px">12822</div>
<div class="c r " style="left:296px;top:298px;width:42px">14</div>
<div class="c r " style="left:341px;top:298px;width:39px">14</div>
<div class="c r " style="left:383px;top:298px;width:22px">0</div>
<div class="c r " style="left:408px;top:298px;width:42px">0</div>
<div class="c r " style="left:453px;top:298px;width:31px">0</div>
<div class="c r " style="left:487px;top:298px;width:59px">500</div>
<div class="c r " style="left:549px;top:298px;width:41px">2483</div>
<div class="c r " style="left:28px;top:313px;width:35px">11</div>
<div class="c r dt" style="left:66px;top:313px;width:56px">10/23/08</div>
<div class="c r " style="left:124px;top:313px;width:34px">4</div>
<div class="c r " style="left:161px;top:313px;width:42px">12832</div>
<div class="c r " style="left:206px;top:313px;width:42px">12783</div>
<div class="c r " style="left:251px;top:313px;width:42px">12785</div>
<div class="c r " style="left:296px;top:313px;width:42px">-37</div>
<div class="c r " style="left:341px;top:313px;width:39px">37</div>
<div class="c r " style="left:383px;top:313px;width:22px">0</div>
<div class="c r " style="left:408px;top:313px;width:42px">0</div>
<div class="c r " style="left:453px;top:313px;width:31px">0</div>
<div class="c r " style="left:487px;top:313px;width:59px">500</div>
<div class="c r " style="left:549px;top:313px;width:41px">2483</div>
<div class="c r " style="left:28px;top:328px;width:35px">12</div>
<div class="c r dt" style="left:66px;top:328px;width:56px">10/23/08</div>
<div class="c r " style="left:124px;top:328px;width:34px">5</div>
<div class="c r " style="left:161px;top:328px;width:42px">12802</div>
<div class="c r " style="left:206px;top:328px;width:42px">12732</div>
<div class="c r " style="left:251px;top:328px;width:42px">12757</div>
<div class="c r " style="left:296px;top:328px;width:42px">-28</div>
<div class="c r " style="left:341px;top:328px;width:39px">28</div>
<div class="c r " style="left:383px;top:328px;width:22px">0</div>
<div class="c r " style="left:408px;top:328px;width:42px">0</div>
<div class="c r " style="left:453px;top:328px;width:31px">0</div>
<div class="c r " style="left:487px;top:328px;width:59px">500</div>
<div class="c r " style="left:549px;top:328px;width:41px">2483</div>
<div class="c r " style="left:28px;top:343px;width:35px">13</div>
<div class="c r dt" style="left:66px;top:343px;width:56px">10/23/08</div>
<div class="c r " style="left:124px;top:343px;width:34px">6</div>
<div class="c r " style="left:161px;top:343px;width:42px">12820</div>
<div class="c r " style="left:206px;top:343px;width:42px">12745</div>
<div class="c r " style="left:251px;top:343px;width:42px">12797</div>
<div class="c r " style="left:296px;top:343px;width:42px">40</div>
<div class="c r " style="left:341px;top:343px;width:39px">40</div>
<div class="c r " style="left:383px;top:343px;width:22px">0</div>
<div class="c r " style="left:408px;top:343px;width:42px">0</div>
<div class="c r " style="left:453px;top:343px;width:31px">0</div>
<div class="c r " style="left:487px;top:343px;width:59px">500</div>
<div class="c r " style="left:549px;top:343px;width:41px">2483</div>
<div class="c r " style="left:28px;top:358px;width:35px">14</div>
<div class="c r dt" style="left:66px;top:358px;width:56px">10/23/08</div>
<div class="c r " style="left:124px;top:358px;width:34px">7</div>
<div class="c r " style="left:161px;top:358px;width:42px">12823</div>
<div class="c r " style="left:206px;top:358px;width:42px">12766</div>
<div class="c r " style="left:251px;top:358px;width:42px">12818</div>
<div class="c r " style="left:296px;top:358px;width:42px">21</div>
<div class="c r " style="left:341px;top:358px;width:39px">21</div>
<div class="c r " style="left:383px;top:358px;width:22px">0</div>
<div class="c r " style="left:408px;top:358px;width:42px">0</div>
<div class="c r " style="left:453px;top:358px;width:31px">0</div>
<div class="c r " style="left:487px;top:358px;width:59px">500</div>
<div class="c r " style="left:549px;top:358px;width:41px">2483</div>
<div class="c r " style="left:28px;top:373px;width:35px">15</div>
<div class="c r dt" style="left:66px;top:373px;width:56px">10/23/08</div>
<div class="c r " style="left:124px;top:373px;width:34px">8</div>
<div class="c r " style="left:161px;top:373px;width:42px">12853</div>
<div class="c r " style="left:206px;top:373px;width:42px">12794</div>
<div class="c r " style="left:251px;top:373px;width:42px">12808</div>
<div class="c r " style="left:296px;top:373px;width:42px">-10</div>
<div class="c r " style="left:341px;top:373px;width:39px">10</div>
<div class="c r " style="left:383px;top:373px;width:22px">0</div>
<div class="c r " style="left:408px;top:373px;width:42px">0</div>
<div class="c r " style="left:453px;top:373px;width:31px">0</div>
<div class="c r " style="left:487px;top:373px;width:59px">500</div>
<div class="c r " style="left:549px;top:373px;width:41px">2483</div>
<div class="c r " style="left:28px;top:388px;width:35px">16</div>
<div class="c r dt" style="left:66px;top:388px;width:56px">10/23/08</div>
<div class="c r " style="left:124px;top:388px;width:34px">9</div>
<div class="c r " style="left:161px;top:388px;width:42px">12828</div>
<div class="c r " style="left:206px;top:388px;width:42px">12776</div>
<div class="c r " style="left:251px;top:388px;width:42px">12819</div>
<div class="c r " style="left:296px;top:388px;width:42px">11</div>
<div class="c r " style="left:341px;top:388px;width:39px">11</div>
<div class="c r " style="left:383px;top:388px;width:22px">0</div>
<div class="c r " style="left:408px;top:388px;width:42px">0</div>
<div class="c r " style="left:453px;top:388px;width:31px">0</div>
<div class="c r " style="left:487px;top:388px;width:59px">500</div>
<div class="c r " style="left:549px;top:388px;width:41px">2483</div>
<div class="bk" style="left:28px;top:116px;width:39px;height:3px"></div>
<div class="bk" style="left:28px;top:116px;width:1px;height:18px"></div>
<div class="bk" style="left:64px;top:116px;width:3px;height:13px"></div>
<div class="bk" style="left:28px;top:131px;width:34px;height:3px"></div>
<div class="hl" style="left:62px;top:129px;width:6px;height:6px"></div>
<div class="bk" style="left:63px;top:130px;width:5px;height:5px"></div>
</div></body></html>
